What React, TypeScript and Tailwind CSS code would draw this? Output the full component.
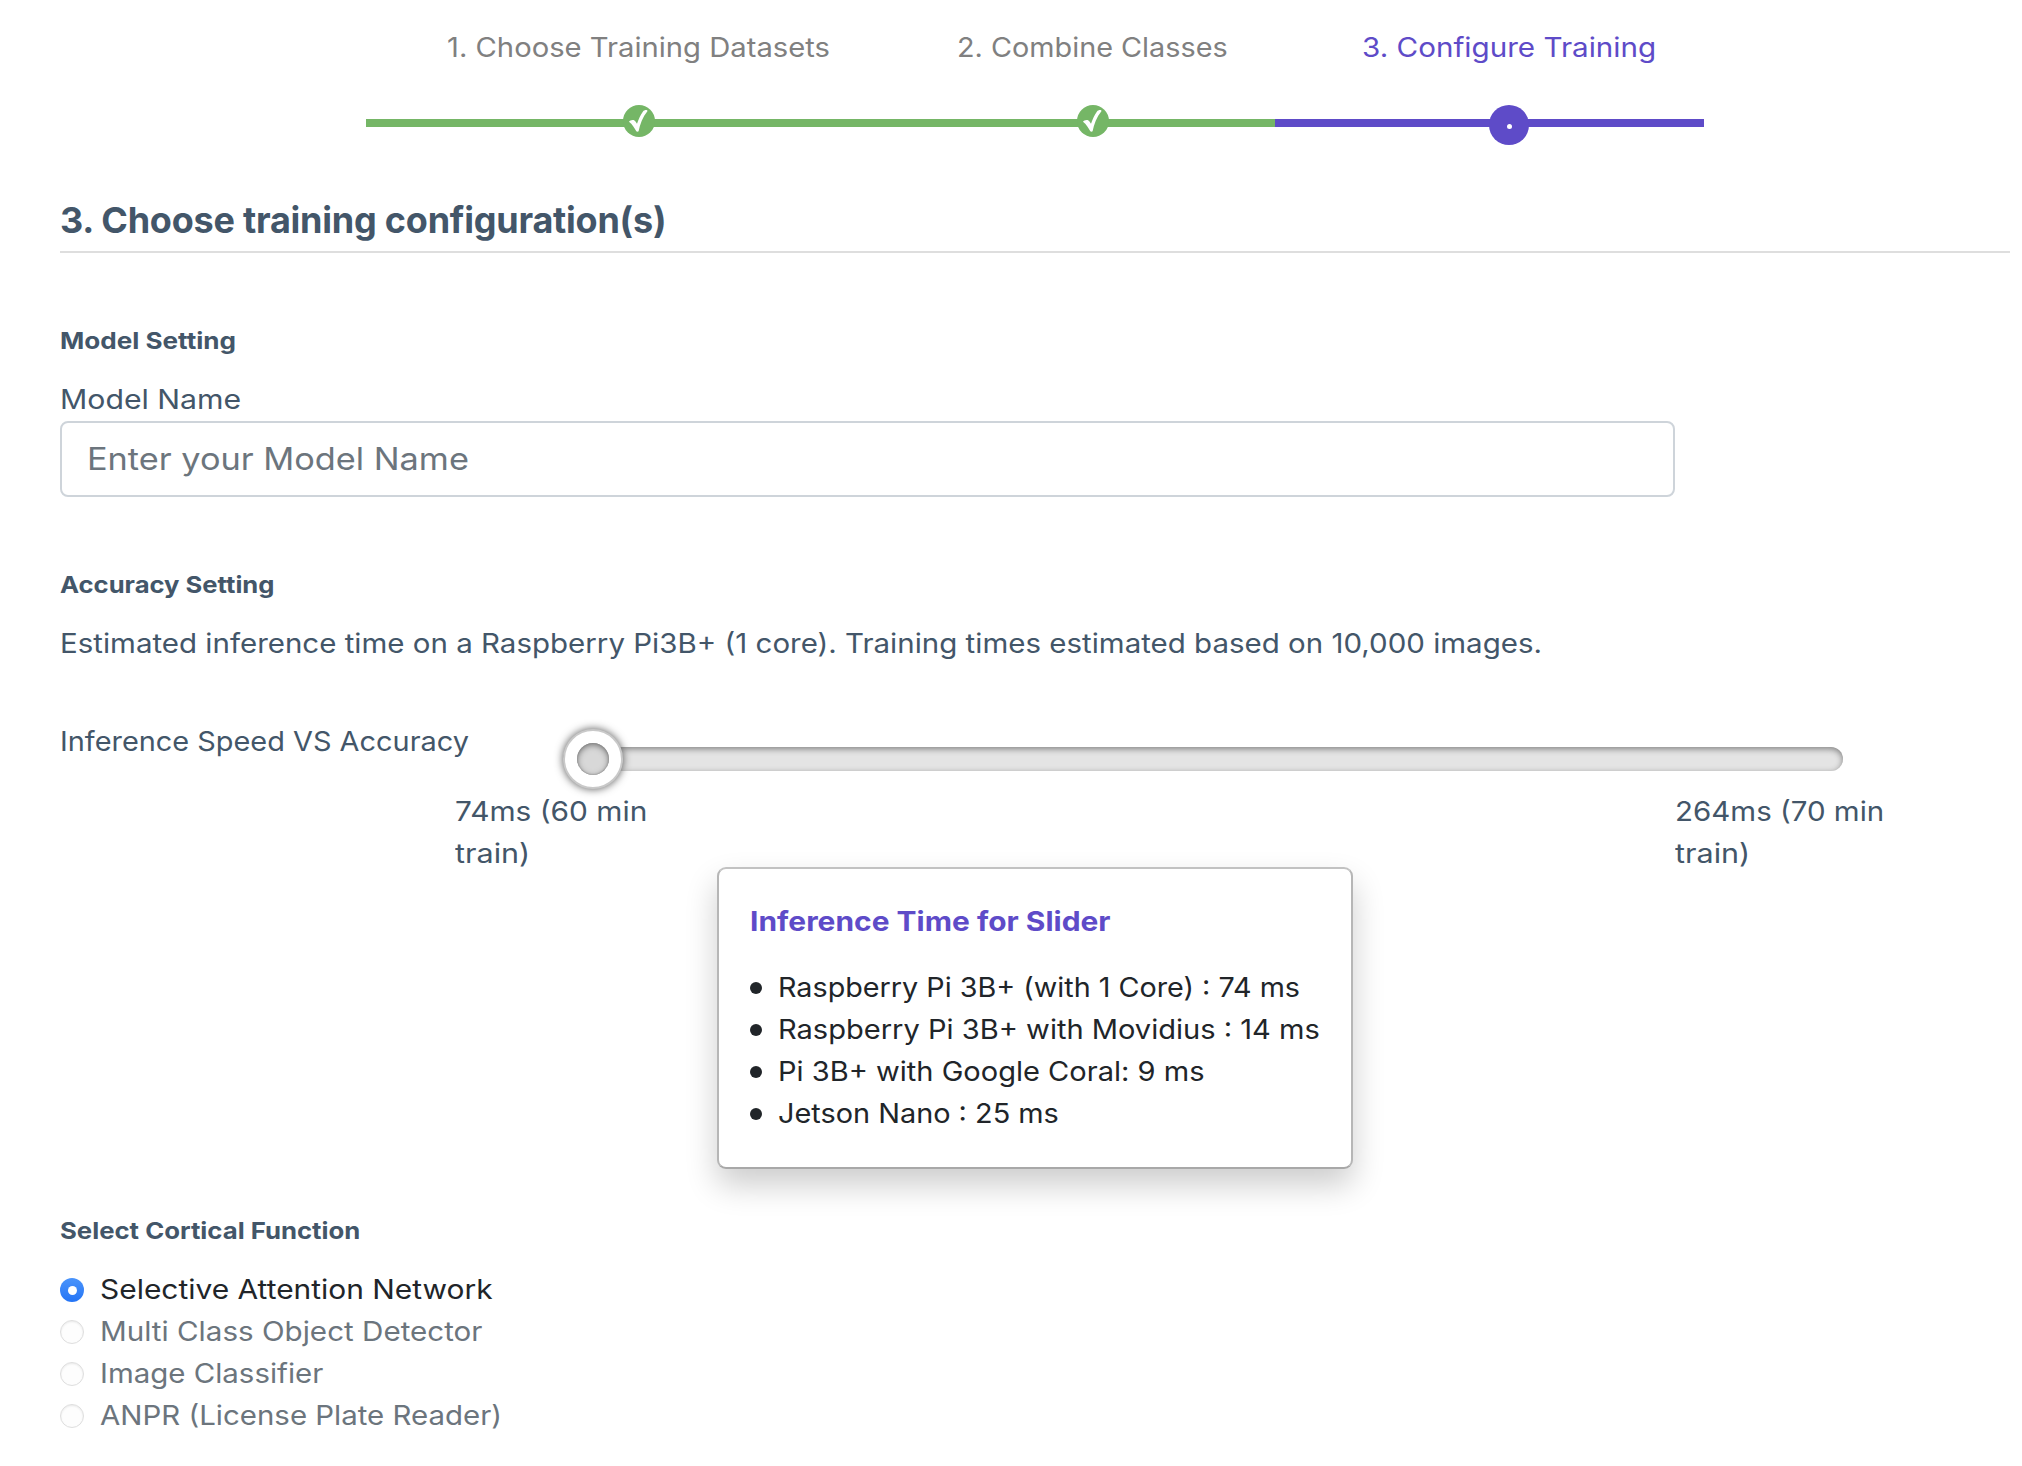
const tooltipRows = [
  { label: 'Raspberry Pi 3B+ (with 1 Core) : 74 ms', stretch: 'scale-x-[1.064]' },
  { label: 'Raspberry Pi 3B+ with Movidius : 14 ms', stretch: 'scale-x-[1.076]' },
  { label: 'Pi 3B+ with Google Coral: 9 ms', stretch: 'scale-x-[1.0755]' },
  { label: 'Jetson Nano : 25 ms', stretch: 'scale-x-[1.069]' },
];

const functions = [
  { label: 'Selective Attention Network', stretch: 'scale-x-[1.108]', active: true },
  { label: 'Multi Class Object Detector', stretch: 'scale-x-[1.096]', active: false },
  { label: 'Image Classifier', stretch: 'scale-x-[1.09]', active: false },
  { label: 'ANPR (License Plate Reader)', stretch: 'scale-x-[1.09]', active: false },
];

// Widens the glyphs horizontally, anchored at the left edge.
function Wide({ stretch, children }: { stretch: string; children: string }) {
  return <span className={`inline-block origin-left ${stretch}`}>{children}</span>;
}

function CheckDot() {
  return (
    <span className="flex size-8 items-center justify-center rounded-full bg-[#75b666]">
      <svg viewBox="0 0 32 32" className="size-8" fill="#fff">
        <path d="M24.400 5.500C23.200 4.700 21 5.200 20 6.600C17.400 10.200 15.600 14.300 14 18.800C12.900 17 11.700 15.600 10.600 15.100C9 14.600 6.700 15.400 6 16.700C9.300 19.300 11.400 22.600 13.300 26.300C14 26.900 15.100 26.800 15.600 26.200C17 19.400 19.700 12 24.400 6.300Z" />
      </svg>
    </span>
  );
}

function Stepper() {
  return (
    <div className="ml-[366px] flex w-[1338px] text-[27px] leading-[42px] whitespace-nowrap">
      <div className="w-[544px]">
        <p className="pl-[80.500px] text-[#808080]">
          <Wide stretch="scale-x-[1.082]">1. Choose Training Datasets</Wide>
        </p>
        <div className="mt-[36px] flex h-10 items-start bg-[linear-gradient(#75b666,#75b666)] bg-[length:100%_8px] bg-[position:0_14px] bg-no-repeat pl-[256.500px]">
          <CheckDot />
        </div>
      </div>
      <div className="w-[365px]">
        <p className="pl-[47px] text-[#808080]">
          <Wide stretch="scale-x-[1.067]">2. Combine Classes</Wide>
        </p>
        <div className="mt-[36px] flex h-10 items-start bg-[linear-gradient(#75b666,#75b666)] bg-[length:100%_8px] bg-[position:0_14px] bg-no-repeat pl-[167px]">
          <CheckDot />
        </div>
      </div>
      <div className="w-[429px]">
        <p className="pl-[86.500px] text-[#5e4bc8]">
          <Wide stretch="scale-x-[1.097]">3. Configure Training</Wide>
        </p>
        <div className="mt-[36px] flex h-10 items-start bg-[linear-gradient(#5e4bc8,#5e4bc8)] bg-[length:100%_8px] bg-[position:0_14px] bg-no-repeat pl-[214px]">
          <span className="flex size-10 items-center justify-center rounded-full bg-[#5e4bc8] pt-[3px]">
            <span className="size-[5px] rounded-full bg-white" />
          </span>
        </div>
      </div>
    </div>
  );
}

function Slider() {
  return (
    <div className="mt-[56px] flex h-[154px] items-start">
      <p className="w-[395px]">
        <Wide stretch="scale-x-[1.07]">Inference Speed VS Accuracy</Wide>
      </p>
      <div className="w-[1430px] pt-[7px]">
        <div className="ml-[108px] flex h-[62px] w-[1280px] items-center">
          <div className="relative h-6 w-full rounded-full bg-[#e4e4e4] shadow-[inset_0_2px_6px_#808080]">
            <span className="absolute top-[-18px] left-0 flex size-[60px] items-center justify-center rounded-full border-2 border-[#c9c9c9] bg-white shadow-[0_0_8px_#555]">
              <span className="size-8 rounded-full bg-[#d8d8d8] shadow-[inset_0_2px_6px_#777,inset_0_0_2px_#777]" />
            </span>
          </div>
        </div>
        <div className="flex justify-between pt-px">
          <p className="w-[200px]">
            <Wide stretch="scale-x-[1.105]">74ms (60 min</Wide>
            <br />
            <Wide stretch="scale-x-[1.131]">train)</Wide>
          </p>
          <p className="w-[210px]">
            <Wide stretch="scale-x-[1.092]">264ms (70 min</Wide>
            <br />
            <Wide stretch="scale-x-[1.131]">train)</Wide>
          </p>
        </div>
      </div>
    </div>
  );
}

function InferenceCard() {
  return (
    <div className="relative mt-[-8px] ml-[657px] h-[302px] w-[636px] rounded-[9px] border-2 border-x-[#b6b6b6] border-t-[#c2c2c2] border-b-[#a8a8a8] bg-white pt-8 pl-[31px] shadow-[0_16px_32px_rgba(0,0,0,0.2)]">
      <p className="font-bold text-[#5e4bc8]">
        <Wide stretch="scale-x-[1.1086]">Inference Time for Slider</Wide>
      </p>
      <ul className="mt-6 text-[#212529]">
        {tooltipRows.map((row) => (
          <li key={row.label} className="flex items-center">
            <span className="mr-4 size-3 rounded-full bg-[#212529]" />
            <Wide stretch={row.stretch}>{row.label}</Wide>
          </li>
        ))}
      </ul>
    </div>
  );
}

export default function App() {
  return (
    <div className="h-[1466px] w-[2022px] overflow-hidden bg-white pt-[27px] font-['Inter',sans-serif] text-[#435669]">
      <Stepper />
      <main className="mt-[53px] ml-[60px] w-[1951px] text-[27px] leading-[42px] whitespace-nowrap">
        <h1 className="h-[55px] w-[1950px] border-b-2 border-[#dedede] text-[36px] leading-[44px] font-bold tracking-[-0.225px]">
          3. Choose training configuration(s)
        </h1>
        <h2 className="mt-[74px] text-[23.4px] leading-[28px] font-bold">
          <Wide stretch="scale-x-[1.114]">Model Setting</Wide>
        </h2>
        <p className="mt-6">
          <Wide stretch="scale-x-[1.119]">Model Name</Wide>
        </p>
        <div className="flex h-[76px] w-[1615px] items-center rounded-lg border-2 border-[#ced4da] bg-white pl-[24.500px] text-[30.8px] text-[#6c757d]">
          <Wide stretch="scale-x-[1.1135]">Enter your Model Name</Wide>
        </div>
        <h2 className="mt-[74px] text-[23.4px] leading-[28px] font-bold">
          <Wide stretch="scale-x-[1.094]">Accuracy Setting</Wide>
        </h2>
        <p className="mt-6">
          <Wide stretch="scale-x-[1.092]">
            Estimated inference time on a Raspberry Pi3B+ (1 core). Training times estimated based on 10,000 images.
          </Wide>
        </p>
        <Slider />
        <InferenceCard />
        <h2 className="mt-12 text-[23.4px] leading-[28px] font-bold">
          <Wide stretch="scale-x-[1.1]">Select Cortical Function</Wide>
        </h2>
        <div className="mt-6">
          {functions.map((fn) => (
            <label key={fn.label} className="flex items-center">
              {fn.active ? (
                <span className="flex size-6 items-center justify-center rounded-full bg-linear-to-b from-[#4a94fb] to-[#2474f5]">
                  <span className="size-[9px] rounded-full bg-white" />
                </span>
              ) : (
                <span className="size-6 rounded-full border border-[#dedede] bg-[#fdfdfd] shadow-[inset_0_1px_2px_#e9e9e9]" />
              )}
              <span className={fn.active ? 'ml-[15.700px] text-[#212529]' : 'ml-4 text-[#6c757d]'}>
                <Wide stretch={fn.stretch}>{fn.label}</Wide>
              </span>
            </label>
          ))}
        </div>
      </main>
    </div>
  );
}
